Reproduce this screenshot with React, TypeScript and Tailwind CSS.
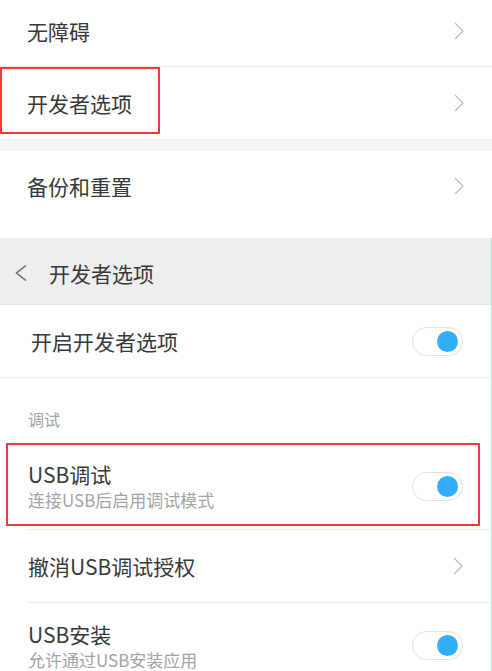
import React from "react"

const font = { fontFamily: '"Noto Sans CJK SC", "Noto Sans", sans-serif' }

function ChevronRight() {
  return (
    <svg width="10" height="18" viewBox="0 0 10 18" fill="none" className="shrink-0">
      <polyline points="1,1 9,9 1,17" stroke="#bdbdbd" strokeWidth="1.3" />
    </svg>
  )
}

function ChevronLeft() {
  return (
    <svg width="12" height="16" viewBox="0 0 12 16" fill="none" className="shrink-0">
      <polyline points="11,0.5 1.5,8 11,15.5" stroke="#6b6b6b" strokeWidth="1.5" />
    </svg>
  )
}

function Toggle() {
  return (
    <div className="flex h-[29px] w-[51px] shrink-0 items-center justify-end rounded-full border border-[#e2e2e2] bg-white pr-[4px]">
      <div className="h-[21px] w-[21px] rounded-full bg-[#33aefc]" />
    </div>
  )
}

export default function App() {
  return (
    <div className="relative h-[671px] w-[492px] overflow-hidden bg-white text-[#383838]" style={font}>
      {/* settings list */}
      <div className="flex h-[67px] items-center justify-between border-b border-[#ececec] pb-[4px] pl-[27px] pr-[28px]">
        <span className="text-[21px] leading-[30px]">无障碍</span>
        <ChevronRight />
      </div>
      <div className="relative flex h-[73px] items-center justify-between border-b border-[#eeeeee] pl-[27px] pr-[28px]">
        <span className="text-[21px] leading-[30px]">开发者选项</span>
        <ChevronRight />
        <div className="absolute left-0 top-0 h-[67px] w-[160px] border-2 border-[#f2383c]" />
      </div>
      <div className="h-[11px] bg-[#f5f5f5]" />
      <div className="flex h-[87px] items-start justify-between pl-[27px] pr-[28px] pt-[20px]">
        <span className="text-[21px] leading-[30px]">备份和重置</span>
        <div className="pt-[6px]">
          <ChevronRight />
        </div>
      </div>

      {/* developer options page */}
      <div className="border-r border-[#a8e4e2]">
        <div className="flex h-[67px] items-center gap-[22px] border-b border-[#e4e4e4] bg-[#eeeeee] pl-[15px] pt-[4px]">
          <ChevronLeft />
          <span className="text-[21px] leading-[30px]">开发者选项</span>
        </div>
        <div className="flex h-[73px] items-center justify-between border-b border-[#eeeeee] pl-[31px] pr-[28px]">
          <span className="text-[21px] leading-[30px]">开启开发者选项</span>
          <Toggle />
        </div>
        <div className="flex h-[65px] items-end pb-[12px] pl-[28px]">
          <span className="text-[16px] leading-[24px] text-[#a3a3a3]">调试</span>
        </div>
        <div className="relative flex h-[86px] items-center justify-between pl-[28px] pr-[28px]">
          <div className="flex flex-col">
            <span className="text-[21px] leading-[28px]">USB调试</span>
            <span className="text-[17px] leading-[24px] text-[#a3a3a3]">连接USB后启用调试模式</span>
          </div>
          <Toggle />
          <div className="absolute left-[6px] top-0 h-[83px] w-[474px] border-2 border-[#f2383c]" />
        </div>
        <div className="ml-[27px] border-t border-[#ececec]" />
        <div className="flex h-[72px] items-center justify-between pl-[28px] pr-[28px]">
          <span className="text-[21px] leading-[30px]">撤消USB调试授权</span>
          <ChevronRight />
        </div>
        <div className="ml-[27px] border-t border-[#ececec]" />
        <div className="flex h-[80px] items-start justify-between pl-[28px] pr-[28px] pt-[17px]">
          <div className="flex flex-col">
            <span className="text-[21px] leading-[28px]">USB安装</span>
            <span className="text-[17px] leading-[24px] text-[#a3a3a3]">允许通过USB安装应用</span>
          </div>
          <div className="pt-[11px]">
            <Toggle />
          </div>
        </div>
      </div>
    </div>
  )
}
